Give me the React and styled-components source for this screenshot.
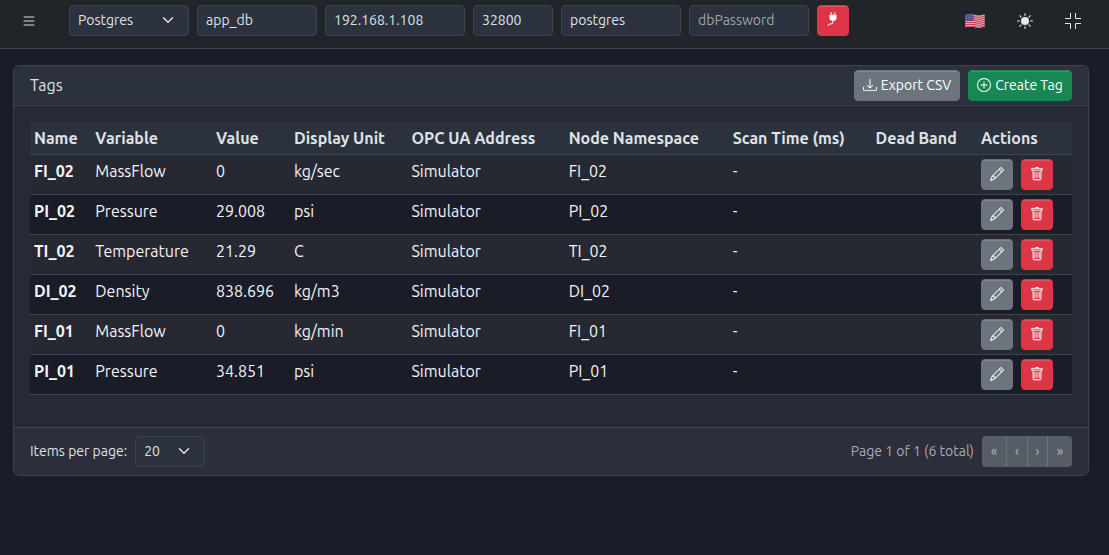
import React from 'react';
import styled, { createGlobalStyle } from 'styled-components';
import { BsPlugFill, BsPencil, BsTrash, BsDownload, BsPlusCircle, BsList, BsSunFill } from 'react-icons/bs';

const Global = createGlobalStyle`
  *, *::before, *::after { box-sizing: border-box; }
  html { height: 100%; }
  body {
    margin: 0;
    min-height: 100%;
    background: #1a1c28;
    color: #dee2e6;
    font: 16px/24px Ubuntu, "Noto Sans", sans-serif;
    overflow: hidden;
  }
  svg { display: block; flex: none; }
`;

const Txt = styled.span`
  white-space: nowrap;
`;

const TopBar = styled.header`
  display: flex;
  align-items: flex-start;
  height: 49px;
  padding: 5px 26px 0 21px;
  background: #212529;
  border-bottom: 1px solid #3b4254;
`;

const IconButton = styled.button`
  display: flex;
  align-items: center;
  justify-content: center;
  width: ${p => p.$w || 16}px;
  height: 31px;
  padding: 0;
  border: 0;
  background: none;
  color: ${p => p.$color || '#e6e9ec'};
`;

const Fields = styled.div`
  display: flex;
  gap: 8px;
  margin-left: 32px;
`;

const Field = styled.div`
  display: flex;
  align-items: center;
  justify-content: space-between;
  width: ${p => p.$w}px;
  height: 31px;
  padding: 0 ${p => p.$pr || 8}px 1px 8px;
  border: 1px solid #3b4254;
  border-radius: 4px;
  background: #2c323e;
  color: ${p => (p.$muted ? '#9fa4ac' : '#dee2e6')};
  font-size: 14px;
`;

const tones = { grey: '#6c757d', red: '#dc3545', green: '#198754' };

const Button = styled.button`
  display: flex;
  align-items: center;
  justify-content: center;
  gap: 4px;
  width: ${p => p.$w || 32}px;
  height: 31px;
  padding: 0 0 1px;
  border: 1px solid ${p => tones[p.$tone]};
  border-radius: 4px;
  background: ${p => tones[p.$tone]};
  box-shadow: inset 0 1px 0 rgba(255, 255, 255, 0.15);
  color: #fff;
  font: inherit;
  font-size: 14px;

  svg { stroke-width: 0.15px; }
`;

const ConnectButton = styled(Button)`
  padding: 0 1px 3px 0;
`;

const Tools = styled.div`
  display: flex;
  gap: 28px;
  margin-left: auto;
`;

const Card = styled.main`
  width: 1076px;
  margin: 16px 0 0 13px;
  border: 1px solid #3b4254;
  border-radius: 6px;
  background: #262a34;
  overflow: hidden;
`;

const CardHeader = styled.div`
  display: flex;
  align-items: flex-start;
  height: 40px;
  padding: 4px 16px 0;
  gap: 8px;
  background: #2c323d;
  border-bottom: 1px solid #3b4254;
`;

const Title = styled.div`
  flex: 1;
  padding-top: 3px;
`;

const CardBody = styled.div`
  height: 321px;
  padding: 16px 16px 0;
`;

const Table = styled.table`
  width: 1042px;
  table-layout: fixed;
  border-collapse: separate;
  border-spacing: 0;
`;

const Th = styled.th`
  height: 33px;
  padding: 0 4px;
  text-align: left;
  font-weight: 600;
  background: #2c323d;
  border-bottom: 1px solid #3b4254;
  white-space: nowrap;
`;

const Row = styled.tr`
  background: ${p => (p.$striped ? '#262832' : '#1a1c28')};
`;

const Td = styled.td`
  height: 40px;
  padding: 4px 4px 0;
  vertical-align: top;
  border-bottom: 1px solid #3b4254;
  color: #f4f5f6;
  font-weight: ${p => (p.$bold ? 700 : 400)};
  white-space: nowrap;
`;

const Actions = styled.div`
  display: flex;
  gap: 8px;
`;

const CardFooter = styled.div`
  display: flex;
  align-items: flex-start;
  height: 48px;
  padding: 8px 16px 0;
  gap: 8px;
  background: #2c2f3b;
  border-top: 1px solid #434957;
  font-size: 14px;
  line-height: 30px;
`;

const PageInfo = styled.div`
  margin-left: auto;
  color: #a6abb3;
`;

const Pager = styled.div`
  display: flex;
  height: 31px;
  border-radius: 4px;
  background: #565d66;
  overflow: hidden;
`;

const PageButton = styled.button`
  width: ${p => p.$w}px;
  padding: 0 0 2px;
  border: 0;
  border-right: ${p => (p.$last ? 0 : 1)}px solid #6b727b;
  background: none;
  color: #b4b8bc;
  font: inherit;
`;

const Chevron = () => (
  <svg width="12" height="12" viewBox="0 0 16 16" fill="none" stroke="#dee2e6" strokeWidth="2" strokeLinecap="round" strokeLinejoin="round">
    <path d="m2 5 6 6 6-6" />
  </svg>
);

const ExitFullscreen = () => (
  <svg width="16" height="16" viewBox="0 0 16 16" fill="none" stroke="#e6e9ec" strokeWidth="1">
    <path d="M5.500 0V5.500H0M10.500 0V5.500H16M5.500 16V10.500H0M10.500 16V10.500H16" />
  </svg>
);

const Flag = () => (
  <svg width="20" height="16" viewBox="0 0 20 16">
    <clipPath id="wave"><path d="M.5 2C3 1 5.500 1 9 1.700S16 2.300 19.500 1.400V13.800C16 15 13 14.900 9.500 14.300S3 13.600.5 14.500Z" /></clipPath>
    <g clipPath="url(#wave)">
      <path fill="#e6e3e8" d="M0 0h20v16H0z" />
      {[0, 1, 2, 3, 4, 5, 6].map(i => (
        <path key={i} stroke="#c9344a" strokeWidth="1.100" fill="none" d={`M0 ${1.7 + i * 2}C3 ${0.9 + i * 2} 5.500 ${0.9 + i * 2} 9 ${1.6 + i * 2}S16 ${2.6 + i * 2} 20 ${1.4 + i * 2}`} />
      ))}
      <path fill="#504f91" d="M0 0h8.500v8.300C6 7.700 3 7.500 0 8.500Z" />
      <path stroke="#8f8dbd" strokeWidth=".6" strokeDasharray=".7 1" d="M1 3h7M1.500 4.500h6.500M1 6h7" />
    </g>
  </svg>
);

const columns = [
  ['Name', 61.3], ['Variable', 120.7], ['Value', 78], ['Display Unit', 117.5], ['OPC UA Address', 157.2],
  ['Node Namespace', 164.1], ['Scan Time (ms)', 142.8], ['Dead Band', 105.4], ['Actions', 95],
];

const rows = [
  ['FI_02', 'MassFlow', '0', 'kg/sec'],
  ['PI_02', 'Pressure', '29.008', 'psi'],
  ['TI_02', 'Temperature', '21.29', 'C'],
  ['DI_02', 'Density', '838.696', 'kg/m3'],
  ['FI_01', 'MassFlow', '0', 'kg/min'],
  ['PI_01', 'Pressure', '34.851', 'psi'],
];

const Col = styled.col`
  width: ${p => p.$w}px;
`;

export default function App() {
  return (
    <>
      <Global />
      <TopBar>
        <IconButton $color="#dee2e6"><BsList size={16} /></IconButton>
        <Fields>
          <Field $w={120} $pr={14}><Txt>Postgres</Txt><Chevron /></Field>
          <Field $w={120}><Txt>app_db</Txt></Field>
          <Field $w={140}><Txt>192.168.1.108</Txt></Field>
          <Field $w={80}><Txt>32800</Txt></Field>
          <Field $w={120}><Txt>postgres</Txt></Field>
          <Field $w={120} $muted><Txt>dbPassword</Txt></Field>
          <ConnectButton $tone="red"><BsPlugFill size={14} /></ConnectButton>
        </Fields>
        <Tools>
          <IconButton $w={24}><Flag /></IconButton>
          <IconButton $w={20}><BsSunFill size={16} /></IconButton>
          <IconButton $w={20}><ExitFullscreen /></IconButton>
        </Tools>
      </TopBar>
      <Card>
        <CardHeader>
          <Title><Txt>Tags</Txt></Title>
          <Button $tone="grey" $w={106}><BsDownload size={14} /><Txt>Export CSV</Txt></Button>
          <Button $tone="green" $w={104}><BsPlusCircle size={14} /><Txt>Create Tag</Txt></Button>
        </CardHeader>
        <CardBody>
          <Table>
            <colgroup>{columns.map(([n, w]) => <Col key={n} $w={w} />)}</colgroup>
            <thead><tr>{columns.map(([n]) => <Th key={n}><Txt>{n}</Txt></Th>)}</tr></thead>
            <tbody>
              {rows.map((r, i) => (
                <Row key={r[0]} $striped={i % 2 === 0}>
                  <Td $bold><Txt>{r[0]}</Txt></Td>
                  <Td><Txt>{r[1]}</Txt></Td>
                  <Td><Txt>{r[2]}</Txt></Td>
                  <Td><Txt>{r[3]}</Txt></Td>
                  <Td><Txt>Simulator</Txt></Td>
                  <Td><Txt>{r[0]}</Txt></Td>
                  <Td>-</Td>
                  <Td />
                  <Td>
                    <Actions>
                      <Button $tone="grey"><BsPencil size={14} stroke="currentColor" /></Button>
                      <Button $tone="red"><BsTrash size={14} stroke="currentColor" /></Button>
                    </Actions>
                  </Td>
                </Row>
              ))}
            </tbody>
          </Table>
        </CardBody>
        <CardFooter>
          <Txt>Items per page:</Txt>
          <Field $w={70} $pr={14}><Txt>20</Txt><Chevron /></Field>
          <PageInfo><Txt>Page 1 of 1 (6 total)</Txt></PageInfo>
          <Pager>
            <PageButton $w={25}>«</PageButton>
            <PageButton $w={21}>‹</PageButton>
            <PageButton $w={20}>›</PageButton>
            <PageButton $w={24} $last>»</PageButton>
          </Pager>
        </CardFooter>
      </Card>
    </>
  );
}
